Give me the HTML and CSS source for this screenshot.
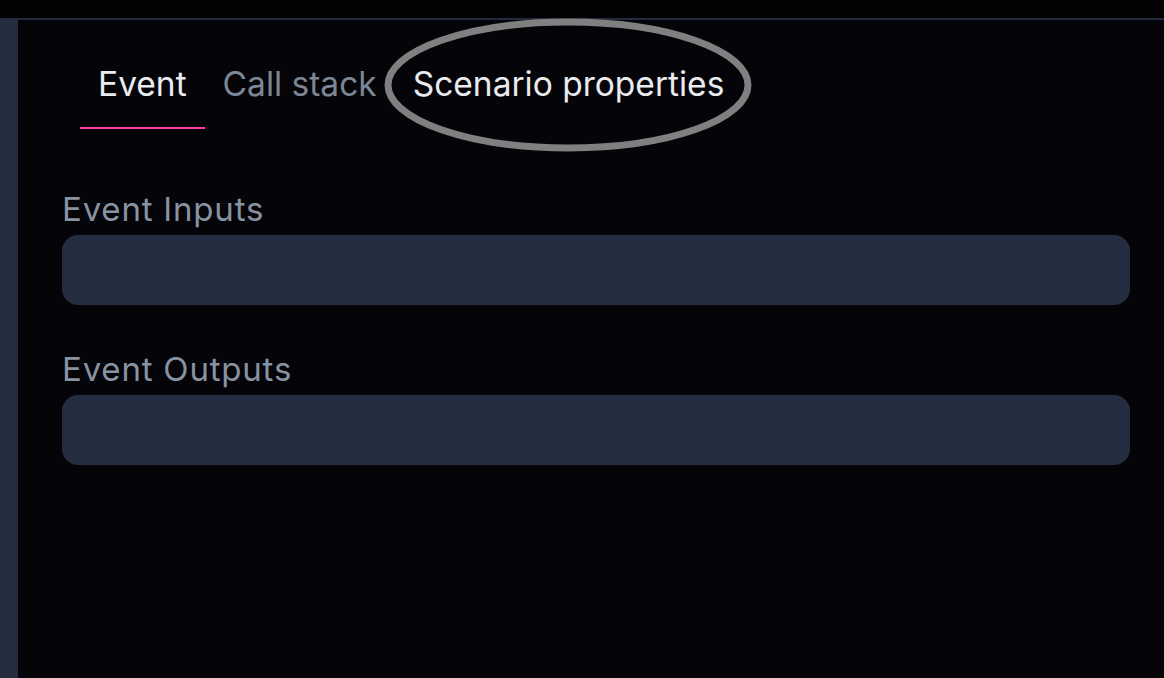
FILE: index.html
```html
<!DOCTYPE html>
<html>
<head>
<meta charset="utf-8">
<link rel="stylesheet" href="styles.css">
</head>
<body>
<div class="topbar"></div>
<div class="layout">
  <div class="sidebar"></div>
  <div class="panel">
    <div class="tabs">
      <div class="tab active">Event</div>
      <div class="tab">Call stack</div>
      <div class="tab highlight">Scenario properties</div>
    </div>
    <div class="section">
      <div class="label">Event Inputs</div>
      <div class="field"></div>
    </div>
    <div class="section">
      <div class="label">Event Outputs</div>
      <div class="field"></div>
    </div>
  </div>
</div>
<svg class="circle" width="380" height="146" viewBox="0 0 380 146">
  <ellipse cx="190" cy="73" rx="180" ry="63" fill="none" stroke="#808080" stroke-width="7"/>
</svg>
</body>
</html>
```
FILE: styles.css
```css
html, body {
  margin: 0;
  padding: 0;
  height: 100%;
}
body {
  background: #030306;
  font-family: Inter, "Noto Sans", sans-serif;
  overflow: hidden;
  position: relative;
}
.topbar {
  height: 18px;
  border-bottom: 2px solid #232a3b;
  background: #030306;
}
.layout {
  display: flex;
  height: calc(100% - 20px);
}
.sidebar {
  width: 18px;
  background: #242c3f;
  flex: none;
}
.panel {
  flex: 1;
  background: #040409;
  padding: 0 34px 0 44px;
}
.tabs {
  display: flex;
  margin-top: 42px;
  margin-left: 18px;
}
.tab {
  font-size: 33.5px;
  line-height: 44px;
  padding: 0 18px 21px;
  color: #7d8794;
  border-bottom: 2px solid transparent;
}
.tab.active {
  color: #e9ebef;
  border-bottom-color: #ff3ea5;
}
.tab.highlight {
  color: #e9ebef;
}
.section {
  margin-top: 61px;
}
.section + .section {
  margin-top: 45px;
}
.label {
  font-size: 33px;
  line-height: 38px;
  letter-spacing: 0.8px;
  color: #8893a2;
  margin-bottom: 7px;
}
.field {
  height: 70px;
  background: #252d40;
  border-radius: 16px;
}
.circle {
  position: absolute;
  left: 378px;
  top: 12px;
}
```
